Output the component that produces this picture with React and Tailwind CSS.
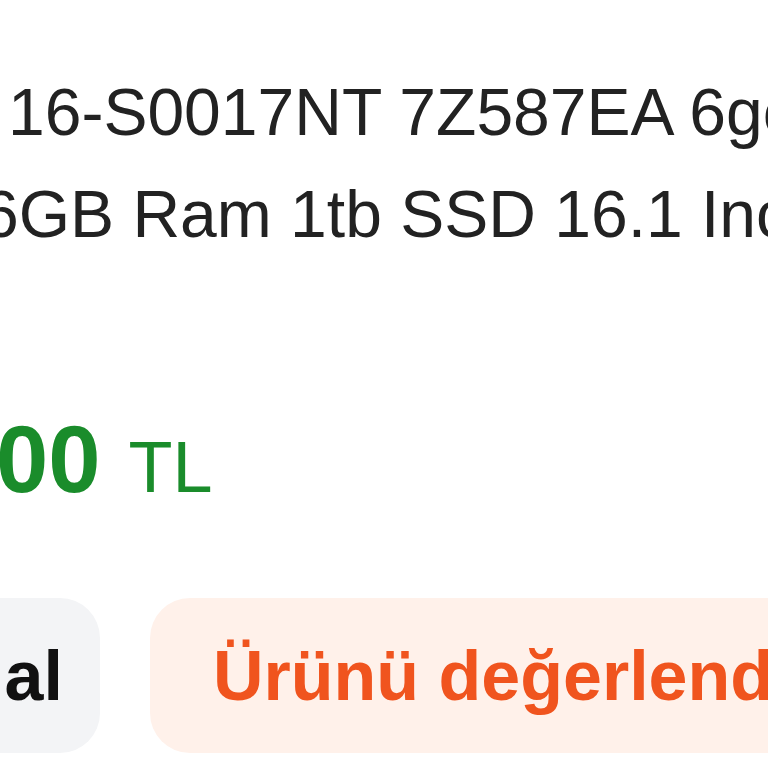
export default function App() {
  return (
    <div className="w-[768px] h-[768px] overflow-hidden bg-white font-['Liberation_Sans',Arial,sans-serif]">
      <div className="pt-[61px]">
        <div className="text-[66px] leading-[102px] text-[#222222] whitespace-nowrap">
          <div className="ml-[8px]">16-S0017NT 7Z587EA 6gen Ryzen 7</div>
          <div className="ml-[-18px]">6GB Ram 1tb SSD 16.1 Inç FHD</div>
        </div>
        <div className="mt-[148px] flex items-baseline whitespace-nowrap text-[#1a8c2b] leading-none ml-[-4px]">
          <span className="text-[94px] font-bold">00</span>
          <span className="ml-[28px] text-[72px] font-medium">TL</span>
        </div>
        <div className="mt-[91px] flex gap-[50px] whitespace-nowrap">
          <button className="h-[155px] ml-[-200px] w-[300px] shrink-0 rounded-[40px] bg-[#f3f4f6] flex items-center justify-end pr-[37px] text-[70px] font-bold leading-none text-[#111111]">
            Satın al
          </button>
          <button className="h-[155px] w-[800px] shrink-0 rounded-[40px] bg-[#fff1ea] flex items-center pl-[63px] text-[70px] font-bold leading-none text-[#f0541e]">
            Ürünü değerlendir
          </button>
        </div>
      </div>
    </div>
  );
}
